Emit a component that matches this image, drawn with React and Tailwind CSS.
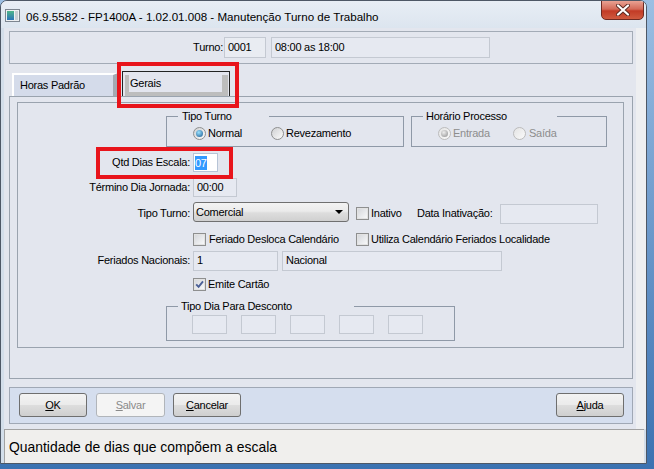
import clsx from 'clsx'

function Field({ className, children }) {
  return (
    <div className={clsx('flex shrink-0 items-center border border-[#c4c9d2] bg-[#e6e9f1] px-[3px] text-[11px] leading-[13px]', className)}>
      {children}
    </div>
  )
}

function Check({ checked }) {
  return (
    <span className="flex h-[13px] w-[13px] shrink-0 items-center justify-center border border-[#8e8f8f] bg-[#f6f6f6]">
      <span className="flex h-[11px] w-[11px] items-center justify-center border border-[#e2e2e2] bg-linear-to-br from-[#d6d8dc] to-[#f7f8f9]">
        {checked && (
          <svg width="9" height="9" viewBox="0 0 9 9">
            <path d="M1.2 4.3 L3.6 6.8 L8 1.4" fill="none" stroke="#4a5f97" strokeWidth="1.9" />
          </svg>
        )}
      </span>
    </span>
  )
}

function Radio({ checked, disabled }) {
  return (
    <span
      className={clsx(
        'flex h-[13px] w-[13px] shrink-0 items-center justify-center rounded-full border bg-linear-to-br',
        disabled ? 'border-[#bcbcbc] from-[#e4e4e4] to-[#fafafa]' : 'border-[#8e8f8f] from-[#cfd0d2] to-[#fcfcfc]'
      )}
    >
      {checked && (
        <span
          className={clsx(
            'h-[7px] w-[7px] rounded-full',
            disabled
              ? 'bg-[radial-gradient(circle_at_40%_35%,#eeeeee,#8c8c8c)]'
              : 'bg-[radial-gradient(circle_at_40%_35%,#9be2ff,#17578f)]'
          )}
        />
      )}
    </span>
  )
}

function Group({ title, className, legend, children }) {
  return (
    <fieldset className={clsx('shrink-0 border border-[#8f99a7]', className)}>
      <legend className={clsx('ml-[11px] bg-[#e3e6ee] pl-[3px] text-[11px] leading-[14px]', legend)}>{title}</legend>
      {children}
    </fieldset>
  )
}

function Btn({ children, disabled, className }) {
  return (
    <div
      className={clsx(
        'flex h-[24px] w-[68px] items-center justify-center rounded-[3px] border text-[11px]',
        disabled
          ? 'border-[#b1b5ba] bg-[#f4f4f4] text-[#8a8a8a]'
          : 'border-[#6f6f6f] bg-[linear-gradient(#f3f3f3,#ebebeb_48%,#dddddd_52%,#cfcfcf)] text-black',
        className
      )}
    >
      {children}
    </div>
  )
}

function Label({ children }) {
  return <div className="w-[175px] shrink-0 whitespace-nowrap pr-[3px] text-right leading-[13px]">{children}</div>
}

function AppIcon() {
  return (
    <svg width="15" height="13" viewBox="0 0 15 13">
      <defs>
        <linearGradient id="ic" x1="0" y1="0" x2="0" y2="1">
          <stop offset="0" stopColor="#4fb58a" />
          <stop offset="1" stopColor="#2a73b8" />
        </linearGradient>
      </defs>
      <rect x="0.5" y="0.5" width="14" height="12" fill="#eef0f2" stroke="#7d8690" />
      <rect x="2" y="2" width="7" height="9" fill="url(#ic)" />
      <rect x="10" y="2" width="3" height="9" fill="#c9ced4" />
    </svg>
  )
}

function TitleBar() {
  return (
    <div className="flex h-[27px] shrink-0 items-start bg-linear-to-b from-[#e8eef5] to-[#dce5ef] tracking-normal">
      <div className="ml-[4px] mt-[8px]">
        <AppIcon />
      </div>
      <div className="ml-[6px] mt-[8px] whitespace-nowrap text-[11.6px] leading-[15px] text-black">
        06.9.5582 - FP1400A - 1.02.01.008 - Manutenção Turno de Trabalho
      </div>
      <div className="-mt-[1px] ml-auto mr-[2px] flex h-[20px] w-[43px] items-center justify-center rounded-b-[5px] border border-[#6e2a22] bg-[linear-gradient(#e9a293,#d46a58_45%,#c23b26_55%,#cf5a3f)]">
        <svg width="14" height="12" viewBox="0 0 14 12">
          <path d="M2 1.5 L12 10.5 M12 1.5 L2 10.5" stroke="#5a2a22" strokeWidth="4" strokeLinecap="round" />
          <path d="M2 1.5 L12 10.5 M12 1.5 L2 10.5" stroke="#ffffff" strokeWidth="2.2" strokeLinecap="round" />
        </svg>
      </div>
    </div>
  )
}

function Tabs() {
  return (
    <div className="relative flex h-[25px] shrink-0 items-end pl-[3px]">
      <div className="flex h-[23px] w-[106px] items-center border-l-2 border-t-2 border-r-[5px] border-l-white border-t-white border-r-[#a5aab2] bg-[#d4dbea] pl-[6px]">
        Horas Padrão
      </div>
      <div className="ml-[4px] flex h-[25px] w-[108px] border border-b-0 border-[#232323] bg-[#e3e5ee] pl-[2px] pr-[1px] pt-[3px]">
        <div className="flex flex-1 items-center border-b-[4px] border-l-[4px] border-r-[6px] border-[#bdbdbd] pl-[1px]">
          Gerais
        </div>
      </div>
      <div className="absolute left-[108px] top-[-9px] z-10 h-[46px] w-[122px] border-[4px] border-[#e8141b]" />
    </div>
  )
}

function GeraisPage() {
  return (
    <div className="ml-[7px] mt-[5px] h-[246px] w-[607px] border border-[#9aa3ae]">
      {/* grupos */}
      <div className="ml-[148px] mt-[6px] flex">
        <Group title="Tipo Turno" className="w-[238px]" legend="w-[91px] pl-[4px]">
          <div className="mb-[6px] mt-[4px] flex h-[13px] items-center pl-[26px]">
            <div className="flex w-[78px] items-center gap-[2px]">
              <Radio checked />
              <span>Normal</span>
            </div>
            <div className="flex items-center gap-[2px]">
              <Radio />
              <span>Revezamento</span>
            </div>
          </div>
        </Group>
        <Group title="Horário Processo" className="ml-[7px] w-[196px]" legend="w-[134px]">
          <div className="mb-[6px] mt-[4px] flex h-[13px] items-center pl-[26px] text-[#8d8d8d]">
            <div className="flex w-[75px] items-center gap-[2px]">
              <Radio checked disabled />
              <span>Entrada</span>
            </div>
            <div className="flex items-center gap-[3px]">
              <Radio disabled />
              <span>Saída</span>
            </div>
          </div>
        </Group>
      </div>

      {/* Qtd Dias Escala */}
      <div className="relative mt-[6px] flex h-[19px] items-center">
        <Label>Qtd Dias Escala:</Label>
        <div className="flex h-[19px] w-[25px] items-center border border-[#b7c4d6] bg-white pl-[1px]">
          <span className="bg-[#3399ff] leading-[14px] text-white">07</span>
        </div>
        <div className="absolute left-[78px] top-[-6px] z-10 h-[32px] w-[137px] border-[4px] border-[#e8141b]" />
      </div>

      {/* Término */}
      <div className="mt-[6px] flex h-[19px] items-center">
        <Label>Término Dia Jornada:</Label>
        <Field className="h-[19px] w-[44px]">00:00</Field>
      </div>

      {/* Tipo Turno */}
      <div className="mt-[5px] flex h-[22px] items-center">
        <Label>Tipo Turno:</Label>
        <div className="flex h-[20px] w-[156px] shrink-0 items-center self-start rounded-[3px] border border-[#707070] bg-[linear-gradient(#f3f3f3,#ebebeb_45%,#dddddd_55%,#d0d0d0)] pl-[2px]">
          <span>Comercial</span>
          <svg className="ml-auto mr-[5px]" width="8" height="4" viewBox="0 0 8 4">
            <path d="M0 0 H8 L4 4 Z" fill="#000" />
          </svg>
        </div>
        <div className="ml-[7px] flex w-[61px] items-center gap-[2px]">
          <Check />
          <span>Inativo</span>
        </div>
        <div className="w-[83px] whitespace-nowrap">Data Inativação:</div>
        <Field className="h-[20px] w-[98px] self-end" />
      </div>

      {/* checkboxes */}
      <div className="mt-[8px] flex h-[14px] items-center pl-[175px]">
        <div className="flex w-[163px] items-center gap-[3px]">
          <Check />
          <span className="whitespace-nowrap">Feriado Desloca Calendário</span>
        </div>
        <div className="flex items-center gap-[2px]">
          <Check />
          <span className="whitespace-nowrap">Utiliza Calendário Feriados Localidade</span>
        </div>
      </div>

      {/* Feriados */}
      <div className="mt-[5px] flex h-[19px] items-center">
        <Label>Feriados Nacionais:</Label>
        <Field className="h-[20px] w-[85px]">1</Field>
        <Field className="ml-[4px] h-[20px] w-[220px]">Nacional</Field>
      </div>

      {/* Emite */}
      <div className="mt-[8px] flex h-[13px] items-center gap-[2px] pl-[175px]">
        <Check checked />
        <span>Emite Cartão</span>
      </div>

      {/* Tipo Dia */}
      <Group title="Tipo Dia Para Desconto" className="ml-[148px] mt-[8px] w-[289px]" legend="ml-[10px] w-[176px]">
        <div className="mb-[6px] mt-[2px] flex gap-[14px] pl-[25px]">
          <Field className="h-[19px] w-[35px]" />
          <Field className="h-[19px] w-[35px]" />
          <Field className="h-[19px] w-[35px]" />
          <Field className="h-[19px] w-[35px]" />
          <Field className="h-[19px] w-[35px]" />
        </div>
      </Group>
    </div>
  )
}

export default function App() {
  return (
    <div className="h-[469px] w-[654px] overflow-hidden bg-linear-to-b from-[#9cbfe3] to-[#3b72b1] font-['Liberation_Sans',Arial,sans-serif] text-[11px] tracking-[-0.25px] text-black">
      <div className="flex h-[464px] w-[647px] flex-col overflow-hidden rounded-t-[7px] border border-[#4e5866] bg-[#d9e3ee]">
        <TitleBar />

        <div className="flex h-[401px] shrink-0">
          <div className="w-[3px] bg-[#d3deea]" />
          <div className="flex w-[632px] flex-col bg-[#e3e6ee] pl-[5px] pr-[3px] pt-[3px]">
            {/* Turno */}
            <div className="flex h-[33px] shrink-0 items-center border border-[#a3abb6]">
              <div className="w-[213px] text-right">Turno:</div>
              <Field className="ml-[1px] h-[21px] w-[42px] border-[#a0a8b3] bg-[#e9ecf2]">0001</Field>
              <Field className="ml-[5px] h-[21px] w-[219px]">08:00 as 18:00</Field>
            </div>

            <div className="mt-[7px]">
              <Tabs />
            </div>

            {/* tab page */}
            <div className="h-[283px] shrink-0 border border-[#9aa3ae]">
              <GeraisPage />
            </div>

            {/* botões */}
            <div className="mt-[8px] flex h-[37px] shrink-0 items-start border border-[#a0a8b5] bg-[#d5deee] pl-[9px] pr-[8px] pt-[5px]">
              <Btn>
                <span>
                  <span className="underline underline-offset-[1px]">O</span>K
                </span>
              </Btn>
              <Btn disabled className="ml-[9px] w-[69px]">
                <span>
                  <span className="underline underline-offset-[1px]">S</span>alvar
                </span>
              </Btn>
              <Btn className="ml-[8px]">
                <span>
                  <span className="underline underline-offset-[1px]">C</span>ancelar
                </span>
              </Btn>
              <Btn className="ml-auto">
                <span>
                  <span className="underline underline-offset-[1px]">A</span>juda
                </span>
              </Btn>
            </div>
          </div>
          <div className="w-[10px] bg-[#eeeff1]" />
        </div>

        {/* status */}
        <div className="flex flex-1">
          <div className="w-[3px] bg-[#d3deea]" />
          <div className="flex flex-1 items-center border-l border-t border-[#a2a2a2] bg-[#f0efed] pl-[4px] text-[13.9px] leading-[16px] tracking-normal">
            Quantidade de dias que compõem a escala
          </div>
          <div className="w-[2px] bg-[#d3deea]" />
        </div>
      </div>
    </div>
  )
}
